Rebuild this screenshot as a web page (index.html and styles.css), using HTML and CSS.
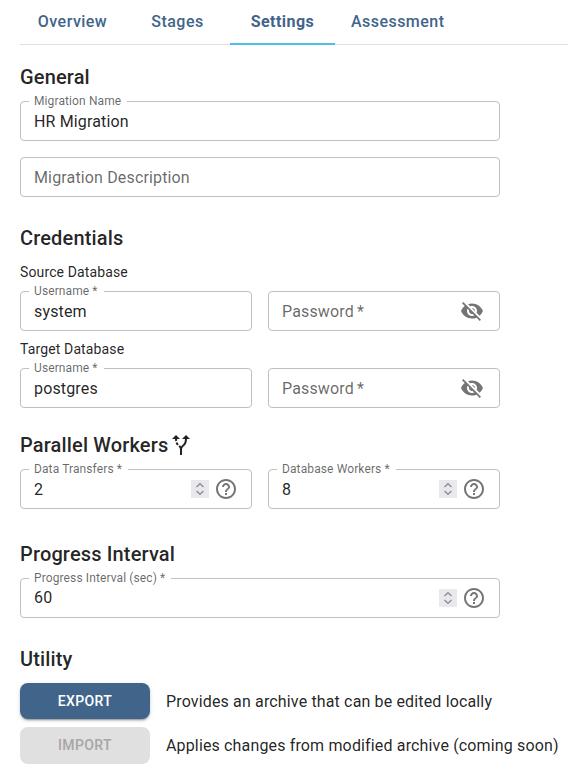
FILE: index.html
```
<!DOCTYPE html>
<html lang="en">
<head>
<meta charset="utf-8">
<title>Migration Settings</title>
<link rel="stylesheet" href="styles.css">
</head>
<body>
<svg class="defs" width="0" height="0" aria-hidden="true">
  <symbol id="eye-off" viewBox="0 0 24 24"><path d="M12 7c2.76 0 5 2.24 5 5 0 .65-.13 1.26-.36 1.83l2.92 2.92c1.51-1.26 2.7-2.89 3.43-4.75-1.73-4.39-6-7.5-11-7.5-1.4 0-2.74.25-3.98.7l2.16 2.16C10.74 7.13 11.35 7 12 7zM2 4.27l2.28 2.28.46.46C3.08 8.3 1.78 10.02 1 12c1.73 4.39 6 7.5 11 7.5 1.55 0 3.03-.3 4.38-.84l.42.42L19.73 22 21 20.73 3.27 3 2 4.27zM7.53 9.8l1.55 1.55c-.05.21-.08.43-.08.65 0 1.66 1.34 3 3 3 .22 0 .44-.03.65-.08l1.55 1.55c-.67.33-1.41.53-2.2.53-2.76 0-5-2.24-5-5 0-.79.2-1.53.53-2.2zm4.31-.78l3.15 3.15.02-.16c0-1.66-1.34-3-3-3l-.17.01z"/></symbol>
  <symbol id="help" viewBox="0 0 24 24"><path d="M11 18h2v-2h-2v2zm1-16C6.48 2 2 6.48 2 12s4.48 10 10 10 10-4.48 10-10S17.52 2 12 2zm0 18c-4.41 0-8-3.59-8-8s3.59-8 8-8 8 3.59 8 8-3.59 8-8 8zm0-14c-2.21 0-4 1.79-4 4h2c0-1.1.9-2 2-2s2 .9 2 2c0 2-3 1.75-3 5h2c0-2.25 3-2.5 3-5 0-2.21-1.79-4-4-4z"/></symbol>
  <symbol id="route" viewBox="0 0 24 24"><path d="m9.78 11.16-1.42 1.42c-.68-.69-1.34-1.58-1.79-2.94l1.94-.49c.32.89.77 1.5 1.27 2.01zM11 6 7 2 3 6h3.02c.02.81.08 1.54.19 2.17l1.94-.49C8.08 7.2 8.03 6.63 8.02 6H11zm10 0-4-4-4 4h2.99c-.1 3.68-1.28 4.75-2.54 5.88-.5.44-1.01.92-1.45 1.55-.34-.49-.73-.88-1.13-1.24L9.46 13.6c.93.85 1.54 1.54 1.54 3.4v5h2v-5c0-2.02.71-2.66 1.79-3.63 1.38-1.24 3.08-2.78 3.2-7.37H21z"/></symbol>
  <symbol id="spin" viewBox="0 0 18 18"><path d="M5.5 7 9 3.8 12.5 7M5.5 11 9 14.2 12.5 11" fill="none" stroke="#8f8f9d" stroke-width="1.5"/></symbol>
</svg>
<nav class="tabs">
  <a class="tab">Overview</a>
  <a class="tab">Stages</a>
  <a class="tab active">Settings</a>
  <a class="tab">Assessment</a>
</nav>
<main>
  <section class="general">
    <h2>General</h2>
    <div class="stack">
      <div class="field"><label class="float">Migration Name</label><span class="value">HR Migration</span></div>
      <div class="field"><span class="value hint">Migration Description</span></div>
    </div>
  </section>
  <section class="credentials">
    <h2>Credentials</h2>
    <h3>Source Database</h3>
    <div class="row">
      <div class="field"><label class="float">Username<i>*</i></label><span class="value">system</span></div>
      <div class="field"><span class="value hint">Password<i>*</i></span><svg class="icon eye"><use href="#eye-off"/></svg></div>
    </div>
    <h3>Target Database</h3>
    <div class="row">
      <div class="field"><label class="float">Username<i>*</i></label><span class="value">postgres</span></div>
      <div class="field"><span class="value hint">Password<i>*</i></span><svg class="icon eye"><use href="#eye-off"/></svg></div>
    </div>
  </section>
  <section class="workers">
    <h2>Parallel Workers<svg class="route"><use href="#route"/></svg></h2>
    <div class="row">
      <div class="field"><label class="float">Data Transfers<i>*</i></label><span class="value">2</span><svg class="spin"><use href="#spin"/></svg><svg class="icon"><use href="#help"/></svg></div>
      <div class="field"><label class="float">Database Workers<i>*</i></label><span class="value">8</span><svg class="spin"><use href="#spin"/></svg><svg class="icon"><use href="#help"/></svg></div>
    </div>
  </section>
  <section class="progress">
    <h2>Progress Interval</h2>
    <div class="field"><label class="float">Progress Interval (sec)<i>*</i></label><span class="value">60</span><svg class="spin"><use href="#spin"/></svg><svg class="icon"><use href="#help"/></svg></div>
  </section>
  <section class="utility">
    <h2>Utility</h2>
    <div class="action"><button class="btn primary">EXPORT</button><p>Provides an archive that can be edited locally</p></div>
    <div class="action"><button class="btn" disabled>IMPORT</button><p>Applies changes from modified archive (coming soon)</p></div>
  </section>
</main>
</body>
</html>
```
FILE: styles.css
```
* { box-sizing: border-box; }
body {
  margin: 0;
  background: #fff;
  color: rgba(0, 0, 0, .87);
  font: 400 16px/24px Roboto, sans-serif;
  letter-spacing: .15px;
  overflow: hidden;
}
.defs { display: block; }
.tabs {
  display: flex;
  height: 45px;
  margin-left: 20px;
  border-bottom: 1px solid #e0e0e0;
}
.tab {
  min-width: 105px;
  height: 45px;
  padding: 12px 16px 0;
  border-bottom: 2px solid transparent;
  color: #41658a;
  font-weight: 500;
  line-height: 20px;
  letter-spacing: .457px;
  text-align: center;
}
.tab.active { border-color: #4cc0eb; font-weight: 700; }
main { width: 480px; margin: 16px 0 0 20px; }
h2 {
  display: flex;
  align-items: center;
  height: 32px;
  margin: 0;
  font-size: 20px;
  font-weight: 500;
  letter-spacing: .15px;
}
h3 {
  margin: 0;
  font-size: 14px;
  font-weight: 400;
  line-height: 20px;
  letter-spacing: .13px;
}
i { font-style: normal; margin-left: .2em; }
.stack { display: grid; gap: 16px; margin-top: 8px; }
.row { display: grid; grid-template-columns: 1fr 1fr; gap: 16px; }
.field {
  position: relative;
  display: flex;
  align-items: center;
  height: 40px;
  padding: 0 13px;
  border: 1px solid #c0c0c0;
  border-radius: 4px;
}
.float {
  position: absolute;
  top: -9px;
  left: 8px;
  padding: 0 6px 0 5px;
  background: #fff;
  color: rgba(0, 0, 0, .6);
  font-size: 12px;
  line-height: 16px;
  letter-spacing: .11px;
  white-space: nowrap;
}
.float i { margin-left: .25em; }
.value { flex: 1; padding-top: 2px; }
.hint { color: rgba(0, 0, 0, .6); }
.icon { width: 24px; height: 24px; fill: #757575; }
.eye { margin-right: 2px; }
.spin { width: 18px; height: 18px; margin-right: 5px; background: #e9e9ed; }
.credentials { margin-top: 25px; }
.credentials h3 { margin: 8px 0 9px; }
.workers { margin-top: 21px; }
.workers .row { margin-top: 8px; }
.route { width: 24px; height: 24px; margin-left: 1px; fill: #212121; }
.progress { margin-top: 29px; }
.progress .field { margin-top: 8px; }
.progress .value { padding-top: 0; }
.utility { width: 548px; margin-top: 25px; }
.utility h2 { margin-bottom: 8px; }
.action { display: flex; align-items: center; gap: 16px; height: 36px; }
.action + .action { height: 37px; margin-top: 8px; }
.action p { margin: 0; padding-top: 2px; white-space: nowrap; }
.action + .action p { padding-top: 1px; }
.btn {
  width: 130px;
  height: 100%;
  padding: 0 0 2px;
  border: 0;
  border-radius: 8px;
  background: #e0e0e0;
  color: #a6a6a6;
  font: 500 14px/24px Roboto, sans-serif;
  letter-spacing: .4px;
}
.primary {
  padding: 0;
  background: #41658a;
  color: #fff;
  box-shadow: 0 3px 1px -2px rgba(0, 0, 0, .2), 0 2px 2px rgba(0, 0, 0, .14), 0 1px 5px rgba(0, 0, 0, .12);
}
```
